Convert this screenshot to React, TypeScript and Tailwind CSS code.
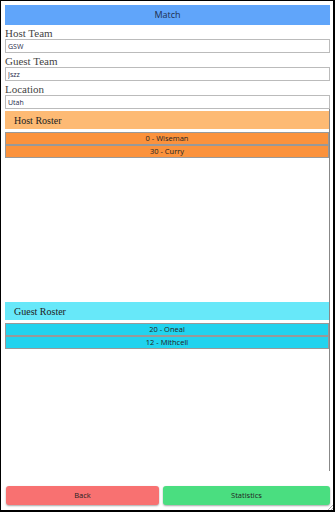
import React from "react";

const hostRoster = ["0 - Wiseman", "30 - Curry"];
const guestRoster = ["20 - Oneal", "12 - Mithcell"];

function Field({ label, value }: { label: string; value: string }) {
  return (
    <div className="flex flex-col">
      <label className="h-[14px] flex items-end text-[11px] leading-[12px] text-[#444] font-['Liberation_Serif',serif]">
        {label}
      </label>
      <input
        readOnly
        value={value}
        className="h-[14px] w-full border border-[#bbb] px-[2px] text-[7px] text-[#1e2a4a] font-['Open_Sans',sans-serif] outline-none"
      />
    </div>
  );
}

function Roster({
  title,
  players,
  head,
  item,
  height,
}: {
  title: string;
  players: string[];
  head: string;
  item: string;
  height: string;
}) {
  return (
    <div className={`${height} flex flex-col pt-[2px]`}>
      <div
        className={`${head} h-[18px] flex items-center pl-[9px] text-[10px] text-[#222] font-['Liberation_Serif',serif]`}
      >
        {title}
      </div>
      <div className="mt-[3px] flex flex-col">
        {players.map((p) => (
          <div
            key={p}
            className={`${item} h-[13px] border border-[#999] flex items-center justify-center text-[7.5px] text-[#222] font-['Open_Sans',sans-serif]`}
          >
            {p}
          </div>
        ))}
      </div>
    </div>
  );
}

export default function App() {
  return (
    <div className="relative w-[335px] h-[512px] bg-white border-l border-t border-r-2 border-b-2 border-black pl-[4px] pr-[3px] pt-[4px] flex flex-col">
      <div className="h-[20px] bg-[#60a5fa] flex items-center justify-center text-[9px] text-[#1e3050] font-['Open_Sans',sans-serif]">
        Match
      </div>

      <Field label="Host Team" value="GSW" />
      <Field label="Guest Team" value="Jszz" />
      <Field label="Location" value="Utah" />

      <div className="h-[362px] border-r border-[#888] flex flex-col">
        <Roster
          title="Host Roster"
          players={hostRoster}
          head="bg-[#fdba74]"
          item="bg-[#fb923c]"
          height="h-[191px]"
        />
        <Roster
          title="Guest Roster"
          players={guestRoster}
          head="bg-[#67e8f9]"
          item="bg-[#22d3ee]"
          height="h-[171px]"
        />
      </div>

      <div className="mt-[15px] flex gap-[4px] pl-[1px]">
        <button className="w-[153px] h-[19px] rounded-[3px] bg-[#f87171] shadow-[0_1px_2px_rgba(0,0,0,0.35)] text-[7.5px] text-[#222] font-['Open_Sans',sans-serif]">
          Back
        </button>
        <button className="w-[167px] h-[19px] rounded-[3px] bg-[#4ade80] shadow-[0_1px_2px_rgba(0,0,0,0.35)] text-[7.5px] text-[#222] font-['Open_Sans',sans-serif]">
          Statistics
        </button>
      </div>

      {/* resize grip */}
      <svg className="absolute right-0 bottom-0" width="6" height="6" viewBox="0 0 6 6">
        <path d="M6 1L1 6M6 4L4 6" stroke="#999" strokeWidth="0.8" />
      </svg>
    </div>
  );
}
